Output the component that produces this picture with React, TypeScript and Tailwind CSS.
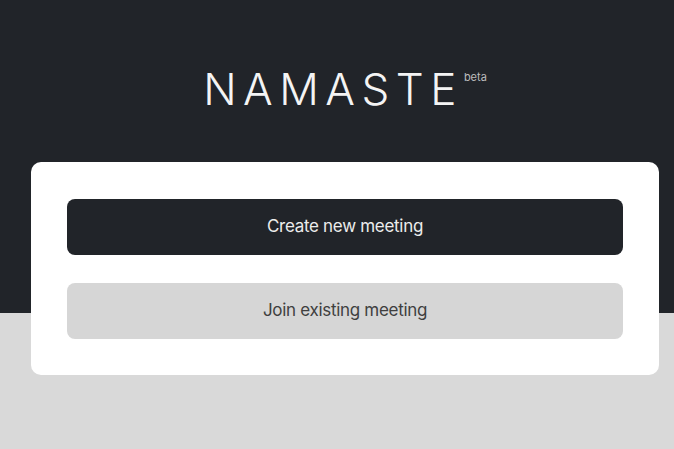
export default function App() {
  return (
    <div className="min-h-screen bg-[linear-gradient(to_bottom,#212429_313px,#d9d9d9_313px)] pl-[31px] pr-[15px] pt-[62px] font-['Inter',sans-serif]">
      <div className="flex justify-center items-start">
        <h1 className="text-[44px] leading-[54px] font-light tracking-[6.5px] text-[#f4f4f4]">
          NAMASTE
        </h1>
        <span className="mt-[7px] ml-[1px] text-[11px] leading-[16px] text-[#bdbdbd]">
          beta
        </span>
      </div>
      <div className="mt-[46px] rounded-[10px] bg-white px-[36px] pt-[37px] pb-[36px] flex flex-col gap-[28px]">
        <button className="h-[56px] w-full rounded-[8px] bg-[#212429] text-[17px] tracking-[-0.3px] text-[#ececec]">
          Create new meeting
        </button>
        <button className="h-[56px] w-full rounded-[8px] bg-[#d6d6d6] text-[17px] tracking-[-0.3px] text-[#3f3f3f]">
          Join existing meeting
        </button>
      </div>
    </div>
  );
}
